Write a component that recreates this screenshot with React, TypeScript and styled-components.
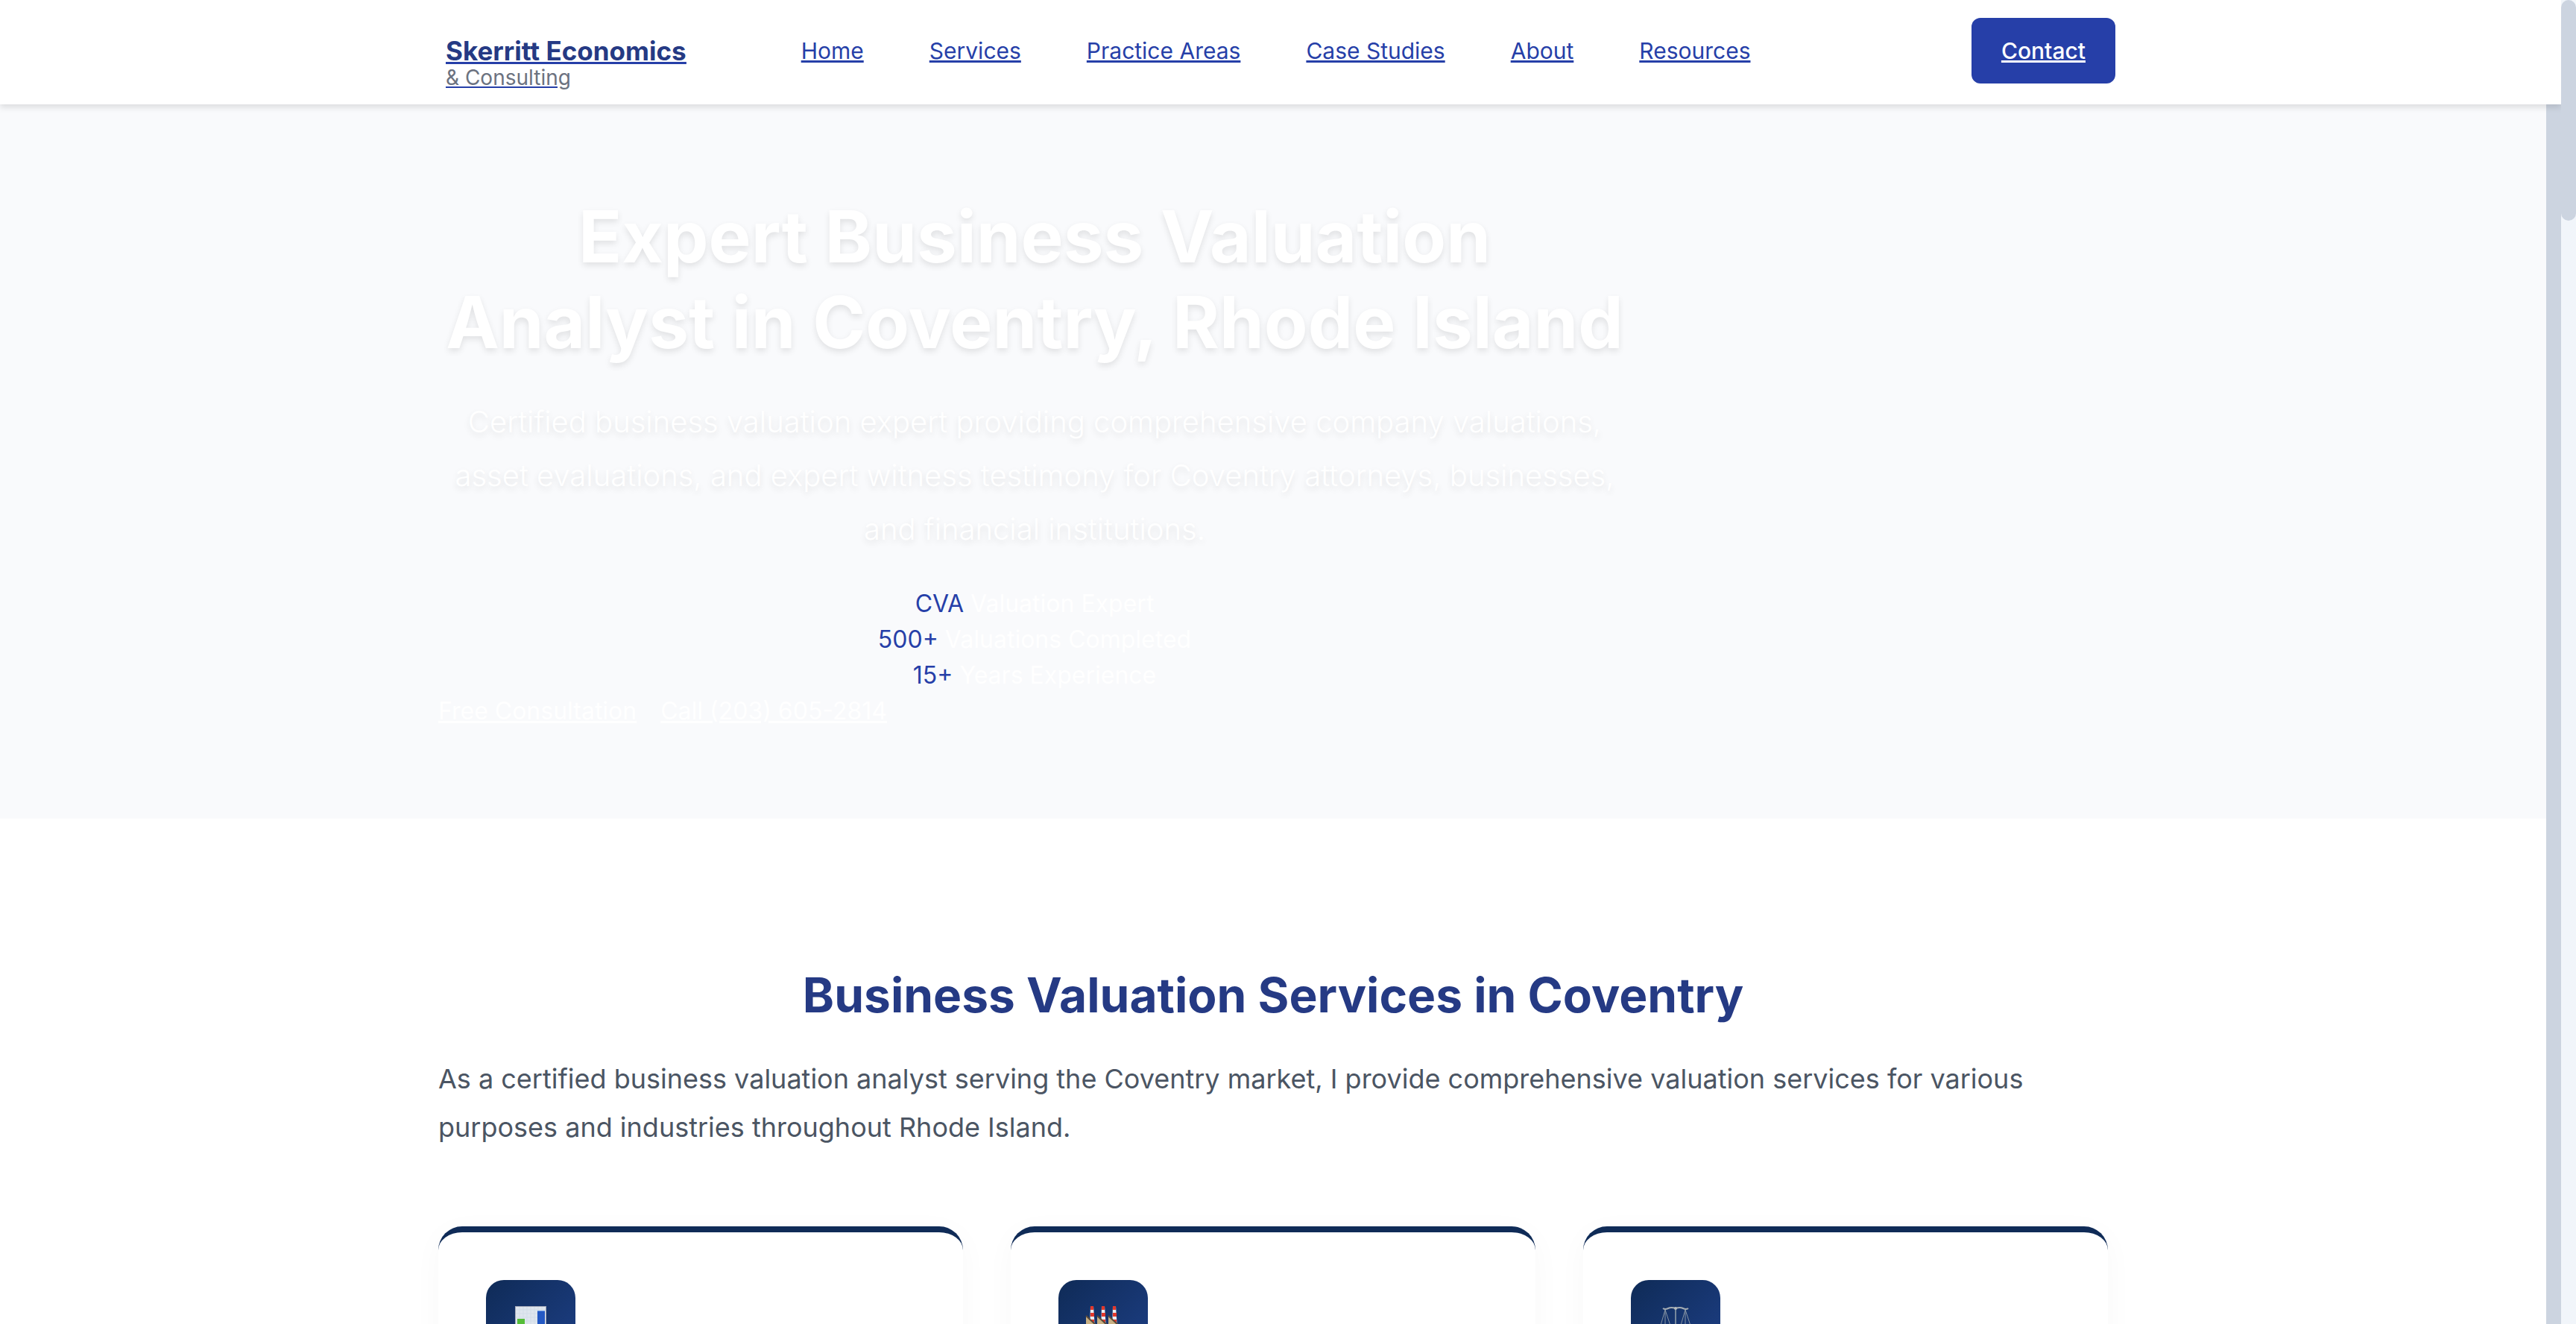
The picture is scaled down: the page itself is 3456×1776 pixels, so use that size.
import React from "react";
import styled, { createGlobalStyle } from "styled-components";

const color = {
  navy: "#253a84",
  blue: "#263fa8",
  deep: "#0f2b57",
  gray: "#6c727f",
  body: "#4b5563",
  hero: "#f9fafc",
  thumb: "#ccd4e0",
  track: "#f1f5fa",
};

const GlobalStyle = createGlobalStyle`
  *, *::before, *::after { box-sizing: border-box; }
  html, body { margin: 0; padding: 0; overflow: hidden; background: #fff; }
  body {
    font-family: Inter, "Liberation Sans", sans-serif;
    font-size: 32px;
    line-height: 48px;
  }
  h1, h2, p, ul { margin: 0; padding: 0; }
  a { color: ${color.blue}; text-decoration: underline; }
`;

const Window = styled.div`
  display: grid;
  grid-template-columns: minmax(0, 1fr) 20px;
  height: 100vh;
  overflow: hidden;
`;

const Page = styled.div`
  display: flex;
  flex-direction: column;
  min-width: 0;
  height: 100vh;
  overflow: hidden;
`;

const Header = styled.header`
  position: relative;
  z-index: 1;
  flex: none;
  min-height: 140px;
  padding-top: 24px;
  background: #fff;
  box-shadow: 0 4px 8px rgba(0, 0, 0, 0.12);
`;

const HeaderInner = styled.div`
  display: flex;
  align-items: flex-start;
  width: 100%;
  max-width: 2240px;
  margin: 0 auto;
`;

const Logo = styled.a`
  display: flex;
  flex-direction: column;
  align-items: flex-start;
  padding-top: 26px;
  line-height: 36px;
`;

const LogoName = styled.span`
  color: ${color.navy};
  font-size: 35px;
  font-weight: 700;
  text-decoration: underline ${color.blue};
`;

const LogoSub = styled.span`
  color: ${color.gray};
  font-size: 28px;
  text-decoration: underline ${color.blue};
`;

const NavList = styled.ul`
  display: flex;
  align-items: center;
  gap: 88px;
  height: 88px;
  margin-left: 154px;
  list-style: none;
  font-size: 30px;
  font-weight: 400;
`;

const ContactLink = styled.a`
  margin-left: auto;
  padding: 20px 40px;
  border-radius: 12px;
  background: ${color.blue};
  color: #fff;
  font-size: 30px;
  font-weight: 500;
`;

const Body = styled.div`
  display: grid;
  grid-template-columns: minmax(0, 1fr) 20px;
  flex: 1;
  min-height: 0;
`;

const Content = styled.main`
  min-width: 0;
  overflow: hidden;
`;

const InnerBar = styled.div`
  background: ${color.thumb};
`;

const ScrollTrack = styled.div`
  background: ${color.track};
`;

const ScrollThumb = styled.div`
  height: 296px;
  border-radius: 10px;
  background: ${color.thumb};
`;

const Container = styled.div`
  width: 100%;
  max-width: 2240px;
  margin: 0 auto;
`;

const Hero = styled.section`
  padding: 120px 0;
  background: ${color.hero};
  color: #fff;
`;

const HeroText = styled.div`
  max-width: 1600px;
  text-align: center;
`;

const HeroTitle = styled.h1`
  margin-bottom: 40px;
  font-size: 96px;
  font-weight: 700;
  line-height: 115px;
  text-shadow: 0 4px 8px rgba(0, 0, 0, 0.1);
`;

const HeroLead = styled.p`
  margin-bottom: 40px;
  font-size: 40px;
  font-weight: 300;
  line-height: 72px;
  text-shadow: 0 4px 8px rgba(0, 0, 0, 0.1);
`;

const StatValue = styled.span`
  color: ${color.blue};
`;

const Actions = styled.div`
  display: flex;
  gap: 32px;
`;

const HeroLink = styled.a`
  color: #fff;
`;

const Services = styled.section`
  padding: 200px 0;
  background: #fff;
`;

const SectionTitle = styled.h2`
  margin-bottom: 43px;
  color: ${color.navy};
  font-size: 64px;
  font-weight: 700;
  line-height: 74px;
  text-align: center;
`;

const SectionLead = styled.p`
  margin-bottom: 100px;
  color: ${color.body};
  font-size: 36px;
  line-height: 65px;
`;

const Cards = styled.div`
  display: grid;
  grid-template-columns: repeat(3, minmax(0, 1fr));
  gap: 64px;
`;

const Card = styled.article`
  min-height: 600px;
  padding: 64px;
  border-top: 8px solid ${color.deep};
  border-radius: 32px;
  background: #fff;
  box-shadow: 0 8px 40px rgba(0, 0, 0, 0.03);
`;

const IconTile = styled.div`
  display: flex;
  align-items: center;
  justify-content: center;
  width: 120px;
  height: 120px;
  border-radius: 24px;
  background: linear-gradient(135deg, #0f2b57, #1e4088);
`;

const navItems = ["Home", "Services", "Practice Areas", "Case Studies", "About", "Resources"];

const stats = [
  { value: "CVA", label: "Valuation Expert" },
  { value: "500+", label: "Valuations Completed" },
  { value: "15+", label: "Years Experience" },
];

const ChartIcon = () => (
  <svg width="56" height="56" viewBox="0 0 56 56" aria-hidden="true">
    <rect x="7.5" y="3.500" width="41" height="50" fill="#dfe6ee" />
    <path d="M8 8H48M8 13H48M8 18H48M8 23H48M8 28H48M8 33H48M8 38H48M8 43H48M8 48H48M13 3V53M18 3V53M23 3V53M28 3V53M33 3V53M38 3V53M43 3V53" stroke="#d3dde8" strokeWidth="1" />
    <rect x="7.5" y="3.500" width="41" height="50" fill="none" stroke="#a3a8b8" />
    <rect x="10" y="20" width="10" height="32" fill="#55bd38" />
    <rect x="24" y="30" width="9" height="22" fill="#dc3a2c" />
    <rect x="37" y="9" width="10" height="43" fill="#2459c4" />
    <path d="M37 9.500H47" stroke="#6d9be6" />
  </svg>
);

const FactoryIcon = () => (
  <svg width="56" height="56" viewBox="0 0 56 56" aria-hidden="true">
    {[13, 28, 43].map((x) => (
      <g key={x}>
        <path d={`M${x - 2} 3H${x + 2}L${x + 4} 34H${x - 3}Z`} fill="#ececf0" />
        <path d={`M${x - 2} 3H${x + 2}V8H${x - 2}ZM${x - 2} 12H${x + 3}V17H${x - 2}ZM${x - 2} 21H${x + 3}V26H${x - 2}Z`} fill="#e2382c" />
      </g>
    ))}
    <path d="M5 53V16L20 29V16L35 29V16L50 29V53Z" fill="#c9b083" />
    <path d="M5 16L20 30M20 16L35 30M35 16L50 30" stroke="#5b4a38" strokeWidth="2" />
  </svg>
);

const ScalesIcon = () => (
  <svg width="56" height="56" viewBox="0 0 56 56" aria-hidden="true" fill="none" stroke="#8794a3">
    <path d="M28 5V50" stroke="#75879c" strokeWidth="2" />
    <path d="M11 6Q14 8 18 6T28 6Q34 4 38 6T45 6" stroke="#a5adb3" strokeWidth="2" />
    <circle cx="28" cy="6" r="2" fill="#b8bcbc" stroke="none" />
    <path d="M14 8L7 32M14 8V32M14 8L22 32M41 8L34 32M41 8V32M41 8L49 32" />
    <path d="M6 32H23Q20 38 14 38T6 32ZM33 32H50Q47 38 41 38T33 32ZM18 51H38" />
  </svg>
);

export default function App() {
  return (
    <>
      <GlobalStyle />
      <Window>
        <Page>
          <Header>
            <HeaderInner>
              <Logo href="#home">
                <LogoName>Skerritt Economics</LogoName>
                <LogoSub>&amp; Consulting</LogoSub>
              </Logo>
              <nav>
                <NavList>
                  {navItems.map((item) => (
                    <li key={item}>
                      <a href="#nav">{item}</a>
                    </li>
                  ))}
                </NavList>
              </nav>
              <ContactLink href="#contact">Contact</ContactLink>
            </HeaderInner>
          </Header>
          <Body>
            <Content>
              <Hero>
                <Container>
                  <HeroText>
                    <HeroTitle>Expert Business Valuation Analyst in Coventry, Rhode Island</HeroTitle>
                    <HeroLead>
                      Certified business valuation expert providing comprehensive company valuations, asset
                      evaluations, and expert witness testimony for Coventry attorneys, businesses, and financial
                      institutions.
                    </HeroLead>
                    {stats.map((s) => (
                      <div key={s.value}>
                        <StatValue>{s.value}</StatValue> <span>{s.label}</span>
                      </div>
                    ))}
                  </HeroText>
                  <Actions>
                    <HeroLink href="#consultation">Free Consultation</HeroLink>
                    <HeroLink href="#call">Call (203) 605-2814</HeroLink>
                  </Actions>
                </Container>
              </Hero>
              <Services>
                <Container>
                  <SectionTitle>Business Valuation Services in Coventry</SectionTitle>
                  <SectionLead>
                    As a certified business valuation analyst serving the Coventry market, I provide comprehensive
                    valuation services for various purposes and industries throughout Rhode Island.
                  </SectionLead>
                  <Cards>
                    <Card>
                      <IconTile>
                        <ChartIcon />
                      </IconTile>
                    </Card>
                    <Card>
                      <IconTile>
                        <FactoryIcon />
                      </IconTile>
                    </Card>
                    <Card>
                      <IconTile>
                        <ScalesIcon />
                      </IconTile>
                    </Card>
                  </Cards>
                </Container>
              </Services>
            </Content>
            <InnerBar />
          </Body>
        </Page>
        <ScrollTrack>
          <ScrollThumb />
        </ScrollTrack>
      </Window>
    </>
  );
}
